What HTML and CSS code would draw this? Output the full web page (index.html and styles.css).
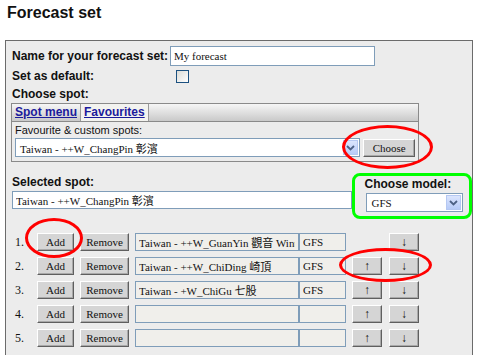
FILE: index.html
```html
<!DOCTYPE html>
<html>
<head>
    <title>Forecast set</title>
    <link rel="stylesheet" href="styles.css">
</head>
<body>
    <h1>Forecast set</h1>
    <div class="panel">
        <div class="field">
            <label class="label field-label">Name for your forecast set:</label>
            <input class="text name-input" type="text" value="My forecast">
        </div>
        <div class="field field-short">
            <label class="label field-label">Set as default:</label>
            <span class="checkbox"></span>
        </div>
        <div class="label choose-label">Choose spot:</div>
        <div class="tabs">
            <div class="tab-strip">
                <a class="tab">Spot menu</a>
                <a class="tab active">Favourites</a>
            </div>
            <div class="tab-body">
                <div class="small-label">Favourite &amp; custom spots:</div>
                <div class="spot-line">
                    <div class="select spot-select">
                        <span class="select-text">Taiwan - ++W_ChangPin 彰濱</span>
                        <span class="arrow"><svg width="9" height="6" viewBox="0 0 9 6"><path d="M1 1 L4.5 4.5 L8 1" fill="none" stroke="#4d6185" stroke-width="1.8"/></svg></span>
                    </div>
                    <button class="btn choose-btn">Choose</button>
                </div>
            </div>
        </div>
        <div class="selected">
            <div class="selected-spot">
                <div class="label">Selected spot:</div>
                <input class="text selected-input" type="text" value="Taiwan - ++W_ChangPin 彰濱">
            </div>
            <div class="model-box">
                <div class="label">Choose model:</div>
                <div class="select model-select">
                    <span class="select-text">GFS</span>
                    <span class="arrow"><svg width="9" height="6" viewBox="0 0 9 6"><path d="M1 1 L4.5 4.5 L8 1" fill="none" stroke="#4d6185" stroke-width="1.8"/></svg></span>
                </div>
            </div>
        </div>
        <div class="spots">
            <div class="spot-row">
                <span class="num">1.</span>
                <button class="btn add">Add</button>
                <button class="btn remove">Remove</button>
                <input class="text row-name" type="text" value="Taiwan - ++W_GuanYin 觀音 Winter">
                <input class="text row-model" type="text" value="GFS">
                <span class="move-gap"></span>
                <button class="btn move">↓</button>
            </div>
            <div class="spot-row">
                <span class="num">2.</span>
                <button class="btn add">Add</button>
                <button class="btn remove">Remove</button>
                <input class="text row-name" type="text" value="Taiwan - ++W_ChiDing 崎頂">
                <input class="text row-model" type="text" value="GFS">
                <button class="btn move up">↑</button>
                <button class="btn move">↓</button>
            </div>
            <div class="spot-row">
                <span class="num">3.</span>
                <button class="btn add">Add</button>
                <button class="btn remove">Remove</button>
                <input class="text row-name" type="text" value="Taiwan - +W_ChiGu 七股">
                <input class="text row-model" type="text" value="GFS">
                <button class="btn move up">↑</button>
                <button class="btn move">↓</button>
            </div>
            <div class="spot-row">
                <span class="num">4.</span>
                <button class="btn add">Add</button>
                <button class="btn remove">Remove</button>
                <input class="text row-name" type="text" value="">
                <input class="text row-model" type="text" value="">
                <button class="btn move up">↑</button>
                <button class="btn move">↓</button>
            </div>
            <div class="spot-row">
                <span class="num">5.</span>
                <button class="btn add">Add</button>
                <button class="btn remove">Remove</button>
                <input class="text row-name" type="text" value="">
                <input class="text row-model" type="text" value="">
                <button class="btn move up">↑</button>
                <button class="btn move">↓</button>
            </div>
        </div>
        <!-- red marks drawn over the form -->
        <span class="mark mark-choose"></span>
        <span class="mark mark-add"></span>
        <span class="mark mark-move"></span>
    </div>
</body>
</html>
```

FILE: styles.css
```css
html, body {
    margin: 0;
    height: 355px;
    overflow: hidden;
    background: #fff;
}
body {
    font-family: "Liberation Sans", Arial, sans-serif;
    color: #111;
}
h1 {
    font-size: 16px;
    line-height: 18px;
    margin: 4px 0 18px 7px;
}
.panel {
    position: relative;
    box-sizing: border-box;
    width: 468px;
    margin-left: 5px;
    border: 1px solid #6b6b6b;
    background: #ececec;
    padding: 5px 0 40px 6px;
}
.label {
    font-size: 12px;
    font-weight: bold;
    line-height: 14px;
}
.field {
    display: flex;
    align-items: center;
    height: 20px;
}
.field-short {
    height: 18px;
    margin-top: 1px;
}
.field-label {
    width: 158px;
}
.text {
    box-sizing: border-box;
    height: 18px;
    margin: 0;
    padding: 0 3px;
    border: 1px solid #7f9db9;
    background: #fff;
    font-family: "Liberation Serif", "Times New Roman", "Noto Sans CJK TC", serif;
    font-size: 11px;
    color: #111;
    outline: none;
}
.name-input {
    width: 205px;
    height: 20px;
}
.checkbox {
    box-sizing: border-box;
    width: 13px;
    height: 13px;
    margin-left: 6px;
    border: 1px solid #1c5180;
    background: linear-gradient(135deg, #dcdcd7, #fff);
}
.choose-label {
    height: 18px;
    display: flex;
    align-items: center;
}
.tabs {
    box-sizing: border-box;
    width: 408px;
    margin-left: -1px;
    border: 1px solid #8a8a8a;
}
.tab-strip {
    display: flex;
    height: 17px;
    border-bottom: 1px solid #8a8a8a;
    background: linear-gradient(#f6f6f6, #c9c9c9);
}
.tab {
    padding: 0 3px;
    border-right: 1px solid #9a9a9a;
    font-size: 12px;
    font-weight: bold;
    line-height: 17px;
    color: #1b1b9c;
    text-decoration: underline;
}
.tab.active {
    background: #f3f3ef;
}
.tab-body {
    height: 37px;
    padding: 2px 3px 0 3px;
}
.small-label {
    font-size: 11px;
    line-height: 13px;
}
.spot-line {
    display: flex;
    align-items: center;
    margin-top: 1px;
}
.select {
    box-sizing: border-box;
    display: flex;
    align-items: center;
    justify-content: space-between;
    height: 19px;
    padding: 1px 1px 1px 4px;
    border: 1px solid #7f9db9;
    background: #fff;
    font-family: "Liberation Serif", "Times New Roman", "Noto Sans CJK TC", serif;
    font-size: 11px;
}
.arrow {
    box-sizing: border-box;
    display: flex;
    align-items: center;
    justify-content: center;
    width: 15px;
    height: 15px;
    border: 1px solid #b5c8f2;
    background: linear-gradient(#dbe5fd, #b7cbf8);
}
.spot-select {
    width: 348px;
}
.btn {
    box-sizing: border-box;
    height: 18px;
    margin: 0;
    padding: 0;
    border: 1px solid;
    border-color: #fff #5f5f5f #5f5f5f #fff;
    box-shadow: inset -1px -1px #a9a9a9;
    background: #d5d5d5;
    font-family: "Liberation Serif", "Times New Roman", serif;
    font-size: 11px;
    color: #111;
}
.choose-btn {
    width: 52px;
    margin-left: 3px;
}
.selected {
    display: flex;
    align-items: flex-start;
    margin-top: 12px;
}
.selected-spot {
    width: 342px;
    padding-top: 1px;
}
.selected-spot .label {
    margin-bottom: 2px;
}
.selected-input {
    width: 340px;
}
.model-box {
    box-sizing: border-box;
    width: 120px;
    height: 46px;
    margin-top: -1px;
    padding: 1px 0 0 9px;
    border: 3px solid #0f0;
    border-radius: 8px;
}
.model-box .label {
    margin-bottom: 2px;
}
.model-select {
    width: 97px;
    margin-left: 2px;
}
.spots {
    display: flex;
    flex-direction: column;
    gap: 6px;
    margin-top: 14px;
}
.spot-row {
    display: flex;
    align-items: center;
    height: 18px;
}
.num {
    width: 22px;
    padding-left: 3px;
    font-family: "Liberation Serif", "Times New Roman", serif;
    font-size: 12px;
}
.add {
    width: 37px;
    margin-right: 6px;
}
.remove {
    width: 49px;
    margin-right: 6px;
}
.row-name, .row-model {
    background: #f0efeb;
}
.row-name {
    width: 164px;
}
.row-model {
    width: 47px;
    margin-right: 6px;
}
.move {
    width: 30px;
    font-size: 12px;
}
.up, .move-gap {
    width: 30px;
    margin-right: 7px;
}
.mark {
    position: absolute;
    box-sizing: border-box;
    border: 3px solid #f00;
    border-radius: 50%;
}
.mark-choose {
    left: 336px;
    top: 84px;
    width: 91px;
    height: 44px;
}
.mark-add {
    left: 19px;
    top: 177px;
    width: 58px;
    height: 40px;
}
.mark-move {
    left: 333px;
    top: 207px;
    width: 93px;
    height: 34px;
}
```
